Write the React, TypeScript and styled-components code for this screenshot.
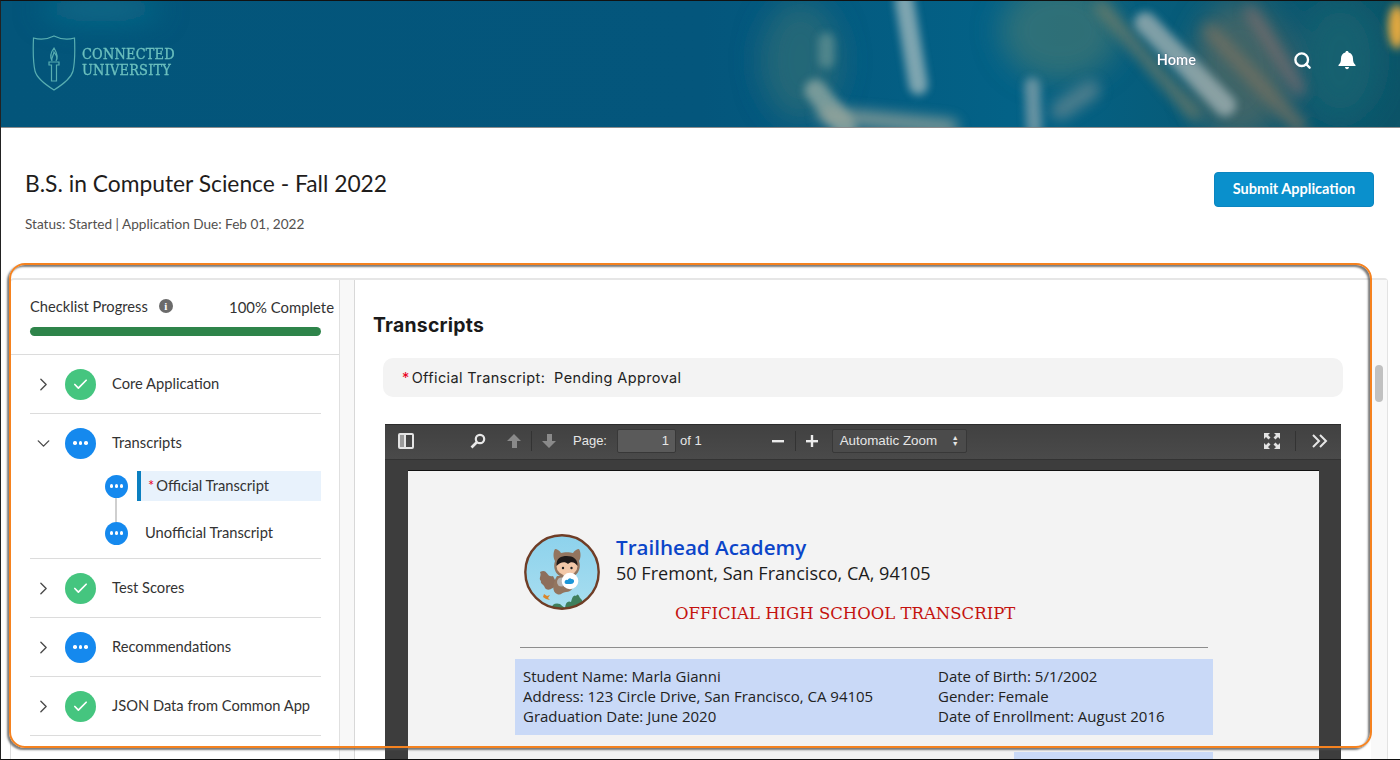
import React from "react";
import styled, { createGlobalStyle } from "styled-components";
import { ChevronDown, ChevronRight, Check, Search } from "lucide-react";

const Global = createGlobalStyle`
  html, body { margin: 0; padding: 0; background: #fff; }
  body { font-family: Lato, "Open Sans", sans-serif; color: #2b2826; }
  * { box-sizing: border-box; }
`;

const Frame = styled.div`
  position: relative;
  width: 1400px;
  height: 760px;
  overflow: hidden;
  background: #fff;
  border-left: 1px solid #222;
  border-top: 1px solid #111;
  border-bottom: 1px solid #111;
  display: flex;
  flex-direction: column;
`;

const Banner = styled.header`
  position: relative;
  flex: none;
  height: 127px;
  border-bottom: 1px solid #8d8d8d;
  overflow: hidden;
  display: flex;
  align-items: flex-start;
  background: #05567a;
`;

const BannerArt = styled.svg`
  position: absolute;
  inset: 0;
  width: 100%;
  height: 100%;
`;

const LogoBlock = styled.div`
  position: relative;
  display: flex;
  align-items: center;
  gap: 6px;
  margin: 34px 0 0 31px;
`;

const LogoText = styled.div`
  font-family: "DejaVu Serif", serif;
  font-stretch: condensed;
  font-size: 14.4px;
  line-height: 16.5px;
  color: #6cc0be;
  letter-spacing: 0.2px;
  margin-top: -2px;
  -webkit-text-stroke: 0.3px #6cc0be;
`;

const Nav = styled.nav`
  position: relative;
  margin-left: auto;
  display: flex;
  align-items: center;
  height: 24px;
  margin-top: 47px;
  padding-right: 43px;
  color: #fff;
`;

const HomeLink = styled.a`
  font-size: 14.5px;
  font-weight: 700;
  color: #fff;
  margin-right: 97px;
  margin-top: -2px;
  text-shadow: 0 0 1px #0b2a55;
`;

const BellIcon = styled.svg`
  margin-left: 25px;
`;

const TitleRow = styled.section`
  flex: none;
  height: 150px;
  padding: 41px 26px 0 24px;
  display: flex;
  justify-content: space-between;
  align-items: flex-start;
`;

const Title = styled.h1`
  margin: 0;
  font-size: 22.8px;
  line-height: 28px;
  font-weight: 400;
  color: #1f1d1c;
`;

const StatusLine = styled.p`
  margin: 19px 0 0;
  font-size: 13.6px;
  line-height: 16px;
  color: #53504e;
`;

const SubmitButton = styled.button`
  width: 160px;
  height: 35px;
  margin-top: 3px;
  padding: 0 0 2px;
  border: 1px solid #0b85c0;
  border-radius: 4px;
  background: #0a90cc;
  color: #fff;
  font-family: inherit;
  font-size: 14.5px;
  font-weight: 700;
`;

const Workspace = styled.section`
  flex: 1;
  min-height: 0;
  margin: 0 12px 0 9px;
  display: grid;
  grid-template-columns: 328px 16px 1fr 16px;
  border-top: 2px solid #e6e6e6;
  border-left: 1px solid #ddd;
  border-right: 1px solid #e3e3e3;
  border-radius: 4px 4px 0 0;
`;

const Sidebar = styled.aside`
  display: flex;
  flex-direction: column;
  min-width: 0;
`;

const ProgressBox = styled.div`
  height: 75px;
  padding: 15px 5px 0 19px;
  border-bottom: 1px solid #dcdcdc;
`;

const ProgressHead = styled.div`
  display: flex;
  align-items: center;
  font-size: 14.7px;
  line-height: 22px;
  height: 22px;
  color: #333;
`;

const InfoDot = styled.span`
  width: 14px;
  height: 14px;
  margin-left: 11px;
  border-radius: 50%;
  background: #6b6b6b;
  color: #fff;
  font-family: "Liberation Serif", serif;
  font-weight: 700;
  font-size: 11px;
  line-height: 14px;
  text-align: center;
`;

const Percent = styled.span`
  margin-left: auto;
  padding-top: 2px;
  font-size: 14.9px;
`;

const ProgressTrack = styled.div`
  width: 291px;
  height: 9px;
  margin-top: 10px;
  border-radius: 5px;
  background: #2e844a;
`;

const Steps = styled.div`
  padding: 0 18px 0 19px;
`;

const Step = styled.div`
  border-bottom: 1px solid #dcdcdc;
  padding-bottom: ${(p: { $open?: boolean }) => (p.$open ? "10px" : "0")};
`;

const StepHead = styled.div`
  height: 58px;
  display: flex;
  align-items: center;
  font-size: 14.7px;
  color: #333;
`;

const Toggle = styled.span`
  width: 35px;
  padding-right: 9px;
  display: flex;
  justify-content: center;
  color: #4a4a4a;
`;

const StateCircle = styled.span<{ $state: "done" | "busy"; $small?: boolean }>`
  flex: none;
  width: ${(p) => (p.$small ? "23px" : "31px")};
  height: ${(p) => (p.$small ? "23px" : "31px")};
  border-radius: 50%;
  background: ${(p) => (p.$state === "done" ? "#45c57f" : "#1589ee")};
  color: #fff;
  display: flex;
  align-items: center;
  justify-content: center;
  gap: ${(p) => (p.$small ? "1.5px" : "2px")};
`;

const CircleDot = styled.i`
  width: 3.5px;
  height: 3.5px;
  border-radius: 50%;
  background: #fff;
`;

const StepLabel = styled.span`
  margin-left: 16px;
  padding-bottom: 2px;
`;

const SubList = styled.div`
  margin-top: -1px;
  padding-left: 75px;
  display: flex;
  flex-direction: column;
`;

const SubRow = styled.div`
  position: relative;
  display: flex;
  align-items: center;
  height: 30px;
  &:first-child::after {
    content: "";
    position: absolute;
    left: 10px;
    top: 27px;
    width: 2px;
    height: 24px;
    background: #cfcfcf;
  }
  & + & {
    margin-top: 17px;
  }
`;

const SubLabel = styled.span<{ $active?: boolean }>`
  margin-left: ${(p) => (p.$active ? "9px" : "17px")};
  flex: 1;
  height: 30px;
  line-height: 28px;
  font-size: 14.7px;
  color: #333;
  background: ${(p) => (p.$active ? "#e8f2fc" : "transparent")};
  border-left: ${(p) => (p.$active ? "4px solid #0b7fc0" : "none")};
  padding-left: ${(p) => (p.$active ? "7px" : "0")};
`;

const Required = styled.span`
  color: #ea001e;
  margin-right: 2px;
`;

const Gutter = styled.div`
  background: #f8f8f8;
  border-left: 1px solid #e0e0e0;
  border-right: 1px solid #d8d8d8;
`;

const Main = styled.main`
  min-width: 0;
  padding: 32px 0 0 19px;
`;

const SectionTitle = styled.h2`
  margin: 0 0 0 -1px;
  font-family: Inter, sans-serif;
  font-size: 19.4px;
  line-height: 26px;
  font-weight: 700;
  letter-spacing: 0.25px;
  color: #1a1a1a;
`;

const StatusStrip = styled.div`
  width: 960px;
  height: 39px;
  margin: 20px 0 0 9px;
  padding-left: 19px;
  border-radius: 10px;
  background: #f3f3f3;
  display: flex;
  align-items: center;
  font-family: Inter, sans-serif;
  font-size: 14.5px;
  font-weight: 400;
  letter-spacing: 0.38px;
  color: #222;
`;

const Viewer = styled.div`
  width: 956px;
  height: 400px;
  margin: 27px 0 0 11px;
  background: #3d3d3d;
`;

const PdfBar = styled.div`
  height: 36px;
  padding: 0 13px 3px;
  border-top: 1px solid #2c2c2c;
  border-bottom: 1px solid #333;
  background: linear-gradient(#414141, #4a4a4a);
  display: flex;
  align-items: center;
  font-family: "Liberation Sans", Arial, sans-serif;
  font-size: 13px;
  color: #e6e6e6;
`;

const BarIcon = styled.svg<{ $gap?: number }>`
  flex: none;
  margin-left: ${(p) => p.$gap ?? 0}px;
`;

const BarRule = styled.span<{ $gap: number }>`
  width: 1px;
  height: 20px;
  margin-left: ${(p) => p.$gap}px;
  background: #333;
`;

const BarText = styled.span<{ $gap: number }>`
  margin-left: ${(p) => p.$gap}px;
`;

const PageInput = styled.div`
  width: 59px;
  height: 24px;
  margin-left: 10px;
  padding-right: 6px;
  border: 1px solid #383838;
  border-radius: 2px;
  background: #5a5a5a;
  text-align: right;
  line-height: 22px;
`;

const ZoomSelect = styled.div`
  width: 135px;
  height: 24px;
  margin-left: 13px;
  padding: 0 7px;
  border: 1px solid #383838;
  border-radius: 2px;
  background: #4b4b4b;
  display: flex;
  align-items: center;
  justify-content: space-between;
  font-size: 13.4px;
`;

const Carets = styled.span`
  font-size: 7px;
  line-height: 6px;
  display: flex;
  flex-direction: column;
  align-items: center;
`;

const PdfCanvas = styled.div`
  padding: 10px 22px 0 23px;
`;

const PdfPage = styled.article`
  height: 360px;
  padding: 63px 106px 0 107px;
  background: #f3f3f3;
  border-top: 1px solid #111;
  font-family: "Open Sans", sans-serif;
  color: #222;
`;

const SchoolHead = styled.div`
  display: flex;
  align-items: flex-start;
  padding-left: 9px;
`;

const SchoolInfo = styled.div`
  margin-left: 16px;
`;

const SchoolName = styled.div`
  font-size: 20.6px;
  line-height: 26px;
  font-weight: 600;
  color: #0b45c9;
`;

const SchoolAddress = styled.div`
  font-size: 18.07px;
  line-height: 26px;
  color: #1c1c1c;
`;

const DocTitle = styled.div`
  margin: -8px 0 0 160px;
  font-family: "DejaVu Serif", serif;
  font-size: 16.5px;
  line-height: 24px;
  color: #c4120e;
`;

const DocRule = styled.hr`
  margin: 21px 5px 0;
  border: 0;
  border-top: 1px solid #8d8d8d;
`;

const InfoBand = styled.div`
  height: 76px;
  margin-top: 11px;
  padding: 7px 8px;
  display: grid;
  grid-template-columns: 415px 1fr;
  background: #c9d9f7;
  font-size: 15px;
  line-height: 20px;
`;

const InfoColumn = styled.div`
  display: flex;
  flex-direction: column;
  white-space: nowrap;
`;

const NextBand = styled.div`
  width: 199px;
  height: 30px;
  margin: 17px 0 0 auto;
  background: #c9d9f7;
`;

const ScrollColumn = styled.div`
  background: #f9f9f9;
  padding: 85px 0 0 4px;
`;

const ScrollThumb = styled.div`
  width: 8px;
  height: 37px;
  border-radius: 4px;
  background: #c1c1c1;
`;

const Callout = styled.div`
  position: absolute;
  left: 8px;
  top: 262px;
  width: 1363px;
  height: 485px;
  border: 2px solid #f5821f;
  border-radius: 16px;
  box-shadow: -2px 2px 2px rgba(80, 80, 80, 0.75), inset -2px 2px 2px rgba(80, 80, 80, 0.75);
  pointer-events: none;
`;

function Busy({ small }: { small?: boolean }) {
  return (
    <StateCircle $state="busy" $small={small}>
      <CircleDot />
      <CircleDot />
      <CircleDot />
    </StateCircle>
  );
}

function Done() {
  return (
    <StateCircle $state="done">
      <Check size={17} strokeWidth={2.4} />
    </StateCircle>
  );
}

function StepItem({ label, done }: { label: string; done?: boolean }) {
  return (
    <Step>
      <StepHead>
        <Toggle>
          <ChevronRight size={21} strokeWidth={1.6} />
        </Toggle>
        {done ? <Done /> : <Busy />}
        <StepLabel>{label}</StepLabel>
      </StepHead>
    </Step>
  );
}

function Astro() {
  return (
    <svg width="76" height="76" viewBox="0 0 76 76">
      <defs>
        <clipPath id="astroClip">
          <circle cx="38" cy="38" r="36.5" />
        </clipPath>
        <linearGradient id="astroSky" x1="0" x2="0" y1="0" y2="1">
          <stop offset="0" stopColor="#8dd2ec" />
          <stop offset="1" stopColor="#a8def0" />
        </linearGradient>
      </defs>
      <circle cx="38" cy="38" r="36.5" fill="url(#astroSky)" />
      <g clipPath="url(#astroClip)">
        <path d="M27 76 Q28 68 36 70 Q38 72 41 74 Q42 66 47 68 Q49 60 52 62 Q54 58 56 64 Q60 66 58 76Z" fill="#3f7f5c" />
        <path d="M20 60 l3 2 l3 -1 l-2 3 l2 2 l-4 -1 l-3 -2z" fill="#d9862b" />
      </g>
      <path d="M29 42 C22 44 24 34 16 38 C18 42 14 44 17 47 C16 50 20 50 21 54 C24 58 30 54 33 50Z" fill="#8d6f5c" />
      <path d="M33 42 C28 50 28 58 33 60 C37 62 38 58 42 58 C48 58 52 52 50 42Z" fill="#93755f" />
      <path d="M31 15 C33 15 36 17 37 19 C40 18 46 18 49 19 C50 17 53 15 55 15 C57 18 57 24 55 27 C58 36 52 44 43 44 C34 44 28 36 31 27 C29 24 29 18 31 15Z" fill="#93755f" />
      <ellipse cx="43" cy="32" rx="10.5" ry="9.5" fill="#f3c8a8" />
      <path d="M32.5 32 C32 24 37 22 43 22 C49 22 54 25 53.5 32 C51 28 47 27 44 30 C41 27 36 28 32.5 32Z" fill="#1f1a19" />
      <circle cx="39" cy="34" r="1.2" fill="#222" />
      <circle cx="47.5" cy="34" r="1.2" fill="#222" />
      <circle cx="37.5" cy="48" r="4.5" fill="#b5b5b5" />
      <circle cx="46" cy="47" r="8.3" fill="#fff" />
      <path d="M40.5 48 q1 -3 3 -2 q2 -3 4 -1 q3 0 2.5 3 q-1 2.5 -4 2 h-3.5 q-2 0 -2 -2z" fill="#1b96d8" />
      <circle cx="38" cy="38" r="36.7" fill="none" stroke="#6f3d26" strokeWidth="2.4" />
    </svg>
  );
}

export default function App() {
  return (
    <Frame>
      <Global />
      <Banner>
        <BannerArt viewBox="0 0 1400 127" preserveAspectRatio="none">
          <defs>
            <linearGradient id="bannerBase" x1="0" x2="1">
              <stop offset="0" stopColor="#03557a" />
              <stop offset="0.5" stopColor="#04567c" />
              <stop offset="0.72" stopColor="#036287" />
              <stop offset="1" stopColor="#0c5468" />
            </linearGradient>
            <filter id="blur6" x="-50%" y="-50%" width="200%" height="200%">
              <feGaussianBlur stdDeviation="7" />
            </filter>
            <filter id="blur3" x="-50%" y="-50%" width="200%" height="200%">
              <feGaussianBlur stdDeviation="4.5" />
            </filter>
            <filter id="blur14" x="-50%" y="-50%" width="200%" height="200%">
              <feGaussianBlur stdDeviation="14" />
            </filter>
          </defs>
          <rect width="1400" height="127" fill="url(#bannerBase)" />
          <g filter="url(#blur14)">
            <ellipse cx="100" cy="8" rx="60" ry="14" fill="#0f6a88" />
            <ellipse cx="800" cy="60" rx="40" ry="60" fill="#2d6c76" opacity="0.8" />
            <ellipse cx="1060" cy="30" rx="60" ry="50" fill="#4d7a72" opacity="0.6" />
            <ellipse cx="1240" cy="70" rx="50" ry="70" fill="#6b6f5f" opacity="0.55" />
            <ellipse cx="1340" cy="60" rx="40" ry="60" fill="#14606f" />
          </g>
          <g filter="url(#blur3)" strokeLinecap="round" fill="none" opacity="0.8">
            <path d="M904 0 L918 85" stroke="#9fb8bc" strokeWidth="19" />
            <path d="M1145 22 L1225 105" stroke="#9fb0b2" strokeWidth="22" />
            <path d="M815 90 L845 127" stroke="#8fa8a3" strokeWidth="22" />
            <path d="M1032 85 L1034 127" stroke="#7f9fa9" strokeWidth="16" />
            <path d="M826 40 L826 60" stroke="#5f8f92" strokeWidth="16" />
          </g>
          <g filter="url(#blur6)" strokeLinecap="round" fill="none" opacity="0.8">
            <path d="M1100 5 L1195 115" stroke="#8a8465" strokeWidth="10" />
            <path d="M1210 30 L1300 127" stroke="#7a7262" strokeWidth="14" />
            <path d="M1250 10 L1300 90" stroke="#8b6f6f" strokeWidth="10" />
            <path d="M825 115 L950 127" stroke="#9aa59a" strokeWidth="16" />
            <path d="M1060 110 L1090 90" stroke="#5f8590" strokeWidth="20" />
          </g>
          <ellipse cx="1397" cy="26" rx="9" ry="22" fill="#e3a93f" filter="url(#blur3)" />
        </BannerArt>
        <LogoBlock>
          <svg width="44" height="56" viewBox="0 0 44 56" fill="none" stroke="#58aeb1" strokeWidth="1.2">
            <path d="M1.5 3 C8 5 16 4 22 1 C28 4 36 5 42.5 3 C43 14 43 27 41 36 C39 44 30 50 22 55 C14 50 5 44 3 36 C1 27 1 14 1.5 3Z" />
            <path d="M22 13 C18 18 18 22 20 26 C19 22 22 20 22 17 C24 20 26 22 24 26 C26 23 25 18 22 13Z" />
            <path d="M17 27 H27 V30 H24.5 V46 H19.5 V30 H17Z" />
          </svg>
          <LogoText>
            CONNECTED
            <br />
            UNIVERSITY
          </LogoText>
        </LogoBlock>
        <Nav>
          <HomeLink>Home</HomeLink>
          <Search size={19} strokeWidth={3} />
          <BellIcon width="20" height="20" viewBox="0 0 20 20" fill="#fff">
            <path d="M10 1 C11 1 11.6 1.7 11.6 2.5 C14.5 3.3 16 5.6 16 8.5 C16 12 16.8 13.5 18.5 15 V16 H1.5 V15 C3.2 13.5 4 12 4 8.5 C4 5.6 5.5 3.3 8.4 2.5 C8.4 1.7 9 1 10 1Z" />
            <path d="M8 17 H12 C12 18.4 11 19.2 10 19.2 C9 19.2 8 18.4 8 17Z" />
          </BellIcon>
        </Nav>
      </Banner>

      <TitleRow>
        <div>
          <Title>B.S. in Computer Science - Fall 2022</Title>
          <StatusLine>Status: Started | Application Due: Feb 01, 2022</StatusLine>
        </div>
        <SubmitButton>Submit Application</SubmitButton>
      </TitleRow>

      <Workspace>
        <Sidebar>
          <ProgressBox>
            <ProgressHead>
              Checklist Progress
              <InfoDot>i</InfoDot>
              <Percent>100% Complete</Percent>
            </ProgressHead>
            <ProgressTrack />
          </ProgressBox>
          <Steps>
            <StepItem label="Core Application" done />
            <Step $open>
              <StepHead>
                <Toggle>
                  <ChevronDown size={21} strokeWidth={1.6} />
                </Toggle>
                <Busy />
                <StepLabel>Transcripts</StepLabel>
              </StepHead>
              <SubList>
                <SubRow>
                  <Busy small />
                  <SubLabel $active>
                    <Required>*</Required>Official Transcript
                  </SubLabel>
                </SubRow>
                <SubRow>
                  <Busy small />
                  <SubLabel>Unofficial Transcript</SubLabel>
                </SubRow>
              </SubList>
            </Step>
            <StepItem label="Test Scores" done />
            <StepItem label="Recommendations" />
            <StepItem label="JSON Data from Common App" done />
          </Steps>
        </Sidebar>
        <Gutter />
        <Main>
          <SectionTitle>Transcripts</SectionTitle>
          <StatusStrip>
            <Required>*</Required>Official Transcript:&nbsp;&nbsp;Pending Approval
          </StatusStrip>
          <Viewer>
            <PdfBar>
              <BarIcon width="16" height="16" viewBox="0 0 16 16" fill="none" stroke="#e4e4e4" strokeWidth="2">
                <rect x="1" y="1" width="14" height="14" rx="1" />
                <path d="M7 1 V15" />
                <rect x="2" y="2" width="4" height="12" fill="#9a9a9a" stroke="none" />
              </BarIcon>
              <BarIcon $gap={56} width="16" height="16" viewBox="0 0 16 16" fill="none" stroke="#e8e8e8" strokeWidth="2.2">
                <circle cx="10" cy="6" r="4.2" />
                <path d="M7 9 L1.5 14.5" strokeWidth="2.6" />
              </BarIcon>
              <BarIcon $gap={20} width="16" height="16" viewBox="0 0 16 16" fill="#8a8a8a">
                <path d="M8 1 L15 8 H11 V15 H6 V8 H1Z" />
              </BarIcon>
              <BarRule $gap={9} />
              <BarIcon $gap={9} width="16" height="16" viewBox="0 0 16 16" fill="#8a8a8a">
                <path d="M8 15 L15 8 H11 V1 H6 V8 H1Z" />
              </BarIcon>
              <BarText $gap={16}>Page:</BarText>
              <PageInput>1</PageInput>
              <BarText $gap={4}>of 1</BarText>
              <BarIcon $gap={69} width="14" height="14" viewBox="0 0 14 14" fill="#ececec">
                <rect x="1" y="6" width="12" height="2.4" />
              </BarIcon>
              <BarRule $gap={10} />
              <BarIcon $gap={9} width="14" height="14" viewBox="0 0 14 14" fill="#ececec">
                <rect x="1" y="6" width="12" height="2.4" />
                <rect x="5.8" y="1" width="2.4" height="12" />
              </BarIcon>
              <ZoomSelect>
                Automatic Zoom
                <Carets>
                  <span>▲</span>
                  <span>▼</span>
                </Carets>
              </ZoomSelect>
              <BarIcon $gap={296} width="18" height="18" viewBox="0 0 18 18" fill="#e2e2e2">
                <path d="M1 1 H7 L5 3 L7.5 5.5 L5.5 7.5 L3 5 L1 7Z" />
                <path d="M17 1 H11 L13 3 L10.5 5.5 L12.5 7.5 L15 5 L17 7Z" />
                <path d="M1 17 H7 L5 15 L7.5 12.5 L5.5 10.5 L3 13 L1 11Z" />
                <path d="M17 17 H11 L13 15 L10.5 12.5 L12.5 10.5 L15 13 L17 11Z" />
              </BarIcon>
              <BarRule $gap={14} />
              <BarIcon $gap={16} width="16" height="14" viewBox="0 0 16 14" fill="none" stroke="#e6e6e6" strokeWidth="2">
                <path d="M1 1 L7 7 L1 13 M8 1 L14 7 L8 13" />
              </BarIcon>
            </PdfBar>
            <PdfCanvas>
              <PdfPage>
                <SchoolHead>
                  <Astro />
                  <SchoolInfo>
                    <SchoolName>Trailhead Academy</SchoolName>
                    <SchoolAddress>50 Fremont, San Francisco, CA, 94105</SchoolAddress>
                  </SchoolInfo>
                </SchoolHead>
                <DocTitle>OFFICIAL HIGH SCHOOL TRANSCRIPT</DocTitle>
                <DocRule />
                <InfoBand>
                  <InfoColumn>
                    <span>Student Name: Marla Gianni</span>
                    <span>Address: 123 Circle Drive, San Francisco, CA 94105</span>
                    <span>Graduation Date: June 2020</span>
                  </InfoColumn>
                  <InfoColumn>
                    <span>Date of Birth: 5/1/2002</span>
                    <span>Gender: Female</span>
                    <span>Date of Enrollment: August 2016</span>
                  </InfoColumn>
                </InfoBand>
                <NextBand />
              </PdfPage>
            </PdfCanvas>
          </Viewer>
        </Main>
        <ScrollColumn>
          <ScrollThumb />
        </ScrollColumn>
      </Workspace>
      <Callout />
    </Frame>
  );
}
